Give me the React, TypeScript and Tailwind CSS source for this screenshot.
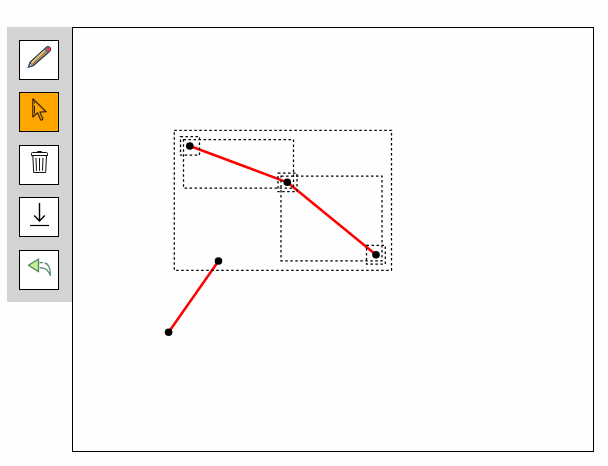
import type { ReactNode } from 'react';

function Tool({ label, active = false, children }: { label: string; active?: boolean; children: ReactNode }) {
  return (
    <button aria-label={label} className={`block h-10 w-10 shrink-0 border border-black ${active ? 'bg-[#ffa500]' : 'bg-white'}`}>
      <svg width="38" height="38" viewBox="0 0 38 38" fill="none" className="block">
        {children}
      </svg>
    </button>
  );
}

type Point = [number, number];

const boxes = [
  [174.3, 130.3, 217.2, 140],
  [183.5, 139.5, 110, 48.6],
  [281, 176, 101, 84.8],
  [180.5, 136.5, 19, 18.7],
  [278, 173, 19, 18.7],
  [366.5, 245.4, 18.8, 18.8],
];
const lines: [Point, Point][] = [
  [[190, 146], [287.3, 182.3]],
  [[287.3, 182.3], [376, 254.7]],
  [[168.6, 332.3], [218.5, 261]],
];
const nodes: Point[] = [[189.8, 146], [287.3, 182.3], [376, 254.7], [218.5, 261], [168.6, 332.3]];

export default function App() {
  return (
    <div className="flex h-[466px] w-[608px] items-start overflow-hidden bg-[#fefefe] pt-[27px] pl-[7px]">
      <aside className="flex h-[275px] w-[65px] shrink-0 flex-col items-start bg-[#d3d3d3] pt-[13px] pl-3">
        <div className="mb-3">
          <Tool label="Draw">
            <path d="M8.4 26.2 10 21.4 26 6.6Q28 4.7 30 6.7 31.4 8.6 29.4 10.5L13.2 24.8Z" fill="#e3ac64" stroke="#1c3149" strokeWidth="1.2" />
            <path d="M11.7 21.4 25.6 8.5" stroke="#f5d896" strokeWidth="1" />
            <path d="M12.8 23 27 9.9" stroke="#2c4258" strokeWidth=".7" />
            <path d="m24.8 7.8 3.8 3.8" stroke="#456d90" strokeWidth="1.8" />
            <path d="M26.5 7.2Q28.2 5.5 29.7 7.1T29 9.9Z" fill="#f0354b" stroke="#f0354b" strokeWidth=".8" />
            <path d="M8.7 25.9 10.1 21.8 12.8 24.5Z" fill="#c3d0d6" stroke="#1c3149" strokeWidth=".7" />
          </Tool>
        </div>
        <div className="mb-[13px]">
          <Tool label="Select" active>
            <path d="M12.8 5.8V24l4.7-4.2 3.3 7.2q2.2.3 2-1.5l-3-6.4 6.3-.4Z" stroke="#33260a" strokeWidth="1.2" strokeLinejoin="round" />
            <path d="M14.5 9v1.5m0 2v8" stroke="#33260a" strokeWidth="1" />
          </Tool>
        </div>
        <div className="mb-3">
          <Tool label="Delete">
            <path d="M11.5 9.5v-2q0-1 1-1h14q1 0 1 1v2ZM17.5 6.5v-1h4v1M12.8 9.5l.9 17h12l.8-17" stroke="#111" strokeWidth="1" />
            <path d="m16 12 .5 12.8M19.5 12v12.8M23 12l-.5 12.8" stroke="#111" strokeWidth="1" />
          </Tool>
        </div>
        <div className="mb-[13px]">
          <Tool label="Download">
            <path d="M19.5 5v17.8M14.2 17.5l5.3 5.4 5.3-5.4" stroke="#000" strokeWidth="1.4" />
            <path d="M10 27.5h19" stroke="#000" strokeWidth="1.2" />
          </Tool>
        </div>
        <Tool label="Undo">
          <path d="m8.5 14.3 10-6.3v12.8Z" fill="#c5ed91" stroke="#4d8567" strokeWidth="1.3" strokeLinejoin="round" />
          <path d="M19.5 11.7H23M24.5 11.8c3.8.8 6 5 5.9 12.6-2-4.8-4.5-7.2-8.4-7.5h-2.2" stroke="#4d8567" strokeWidth="1.2" strokeLinejoin="round" />
        </Tool>
      </aside>
      <main className="h-[425px] w-[522px] shrink-0 border border-black">
        <svg width="520" height="423" viewBox="73 28 520 423" className="block">
          {lines.map(([a, b], i) => (
            <line key={i} x1={a[0]} y1={a[1]} x2={b[0]} y2={b[1]} stroke="#ff0000" strokeWidth="2.5" />
          ))}
          {nodes.map(([x, y], i) => <circle key={i} cx={x} cy={y} r="3.8" fill="#000" />)}
          {boxes.map(([x, y, width, height], i) => (
            <rect key={i} x={x} y={y} width={width} height={height} fill="none" stroke="#000" strokeWidth="1.25" strokeDasharray="2.5 2.5" />
          ))}
        </svg>
      </main>
    </div>
  );
}
